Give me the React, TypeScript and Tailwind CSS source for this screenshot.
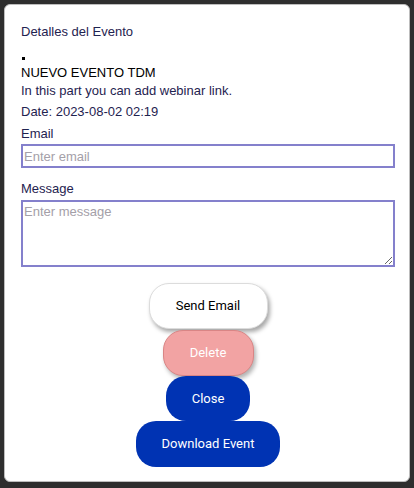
import React from "react";

const App = () => {
  return (
    <div className="w-[414px] h-[488px] bg-[#2e2e2e] pt-[4px] pl-[4px] font-['Liberation_Sans',Arial,sans-serif]">
      <div className="w-[406px] h-[478px] bg-white rounded-[6px] border border-[#bdbdbd] pl-[16px] pr-[14px] pt-[18px] flex flex-col">
        <h2 className="text-[13px] leading-[18px] text-[#1f2350]">Detalles del Evento</h2>

        <div className="w-[3px] h-[3px] bg-black mt-[16px] ml-[1px]"></div>

        <h3 className="text-[13px] leading-[16px] text-black mt-[5px]">NUEVO EVENTO TDM</h3>
        <p className="text-[13px] leading-[18px] text-[#1f2350] mt-[1px]">
          In this part you can add webinar link.
        </p>
        <p className="text-[13px] leading-[18px] text-[#1f2350] mt-[3px]">Date: 2023-08-02 02:19</p>

        <label className="text-[13px] leading-[18px] text-[#1f2350] mt-[4px]">Email</label>
        <input
          type="text"
          placeholder="Enter email"
          className="mt-[1px] h-[24px] w-full border-2 border-[#8480cc] px-[1px] text-[13px] outline-none placeholder:text-[#a4a0a8]"
        />

        <label className="text-[13px] leading-[18px] text-[#1f2350] mt-[12px]">Message</label>
        <textarea
          placeholder="Enter message"
          className="mt-[2px] h-[67px] w-full border-2 border-[#8480cc] px-[1px] text-[13px] outline-none placeholder:text-[#a4a0a8]"
        />

        <div className="flex flex-col items-center mt-[16px] font-['Roboto',sans-serif] text-[13px]">
          <button className="w-[119px] h-[46px] rounded-[20px] bg-white text-black border border-[#dcdcdc] shadow-[2px_3px_4px_rgba(0,0,0,0.35)]">
            Send Email
          </button>
          <button className="mt-[1px] w-[91px] h-[46px] rounded-[20px] bg-[#f2a3a3] text-white border border-[#d98585] shadow-[2px_3px_4px_rgba(0,0,0,0.3)]">
            Delete
          </button>
          <button className="w-[84px] h-[45px] rounded-[20px] bg-[#0033b3] text-white">
            Close
          </button>
          <button className="w-[144px] h-[46px] rounded-[20px] bg-[#0033b3] text-white">
            Download Event
          </button>
        </div>
      </div>
    </div>
  );
};

export default App;
